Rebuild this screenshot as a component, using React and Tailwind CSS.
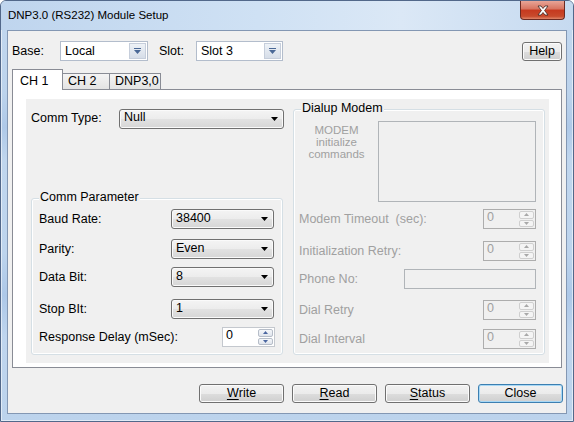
import React from 'react';

const ArrowDown = ({ color = '#000000' }) => (
  <svg width="7" height="4" viewBox="0 0 7 4">
    <path d="M0 0h7L3.5 4z" fill={color} />
  </svg>
);

const SmallTri = ({ up, color }) => (
  <svg width="5" height="3" viewBox="0 0 5 3">
    <path d={up ? 'M0 3h5L2.5 0z' : 'M0 0h5L2.5 3z'} fill={color} />
  </svg>
);

function EditCombo({ value, className }) {
  return (
    <div className={`flex h-[20px] border border-[#b3bdcc] bg-white ${className}`}>
      <div className="flex-1 flex items-center pl-[4px]">{value}</div>
      <div className="w-[17px] my-px mr-px flex items-center justify-center border border-[#c6cedb] bg-gradient-to-b from-[#eef2f7] to-[#d6dde8]">
        <svg width="7" height="6" viewBox="0 0 7 6">
          <rect width="7" height="1" fill="#4a6896" />
          <path d="M0 2h7L3.5 6z" fill="#4a6896" />
        </svg>
      </div>
    </div>
  );
}

function ListCombo({ value, className }) {
  return (
    <div className={`flex h-[20px] rounded-[3px] border border-[#707070] bg-[linear-gradient(#f4f4f4,#ececec_50%,#e2e2e2_50%,#d6d6d6)] shadow-[inset_0_0_0_1px_#fafafa] ${className}`}>
      <div className="flex-1 flex items-center pl-[4px] pb-[2px]">{value}</div>
      <div className="w-[18px] flex items-center justify-center">
        <ArrowDown />
      </div>
    </div>
  );
}

function Spin({ value, disabled }) {
  const arrow = disabled ? '#a8a8a8' : '#4a66a0';
  return (
    <div className={`flex h-[20px] w-[53px] border ${disabled ? 'border-[#adadad] bg-[#f0f0f0] text-[#a0a0a0]' : 'border-[#c4c8ce] bg-white text-black'}`}>
      <div className="flex-1 pl-[3px] leading-[15px]">{value}</div>
      <div className="w-[17px] flex flex-col gap-px p-px">
        <div className={`flex-1 flex items-center justify-center rounded-[2px] border ${disabled ? 'border-[#cfcfcf] bg-[#f4f4f4]' : 'border-[#b6bdc8] bg-gradient-to-b from-[#f5f7fa] to-[#dfe4ec]'}`}>
          <SmallTri up color={arrow} />
        </div>
        <div className={`flex-1 flex items-center justify-center rounded-[2px] border ${disabled ? 'border-[#cfcfcf] bg-[#f4f4f4]' : 'border-[#b6bdc8] bg-gradient-to-b from-[#f5f7fa] to-[#dfe4ec]'}`}>
          <SmallTri color={arrow} />
        </div>
      </div>
    </div>
  );
}

function PushButton({ children, focused, className }) {
  return (
    <div
      className={`flex items-center justify-center h-[19px] rounded-[3px] border bg-[linear-gradient(#f2f2f2,#ebebeb_50%,#dddddd_50%,#cfcfcf)] ${
        focused ? 'border-[#3c7fb1] shadow-[inset_0_0_0_1px_#a8d8f5]' : 'border-[#707070] shadow-[inset_0_0_0_1px_#fbfbfb]'
      } ${className}`}
    >
      {children}
    </div>
  );
}

function GroupBox({ label, className, children }) {
  return (
    <div className={`relative rounded-[3px] border border-[#d5dfe5] shadow-[inset_0_0_0_1px_#ffffff] ${className}`}>
      <span className="absolute left-[7px] top-[-9px] px-[1px] bg-[#f0f0f0] leading-[14px] text-black">
        {label}
      </span>
      {children}
    </div>
  );
}

export default function App() {
  return (
    <div className="w-[574px] h-[422px] bg-white font-['Liberation_Sans',Arial,sans-serif] text-[12.5px] text-black">
      <div className="relative w-[574px] h-[422px] rounded-t-[6px] border border-[#52688a] bg-[linear-gradient(180deg,#c3d8ef_0%,#bcd3ec_22%,#afc9e8_30%,#c0d6ee_38%,#bdd4ed_60%,#adc8e8_70%,#bfd5ee_80%,#bcd3ec_100%)] shadow-[inset_0_0_0_1px_rgba(255,255,255,0.55)]">
        {/* Title bar */}
        <div className="h-[29px] flex items-center pl-[7px] rounded-t-[5px] bg-[linear-gradient(90deg,#bfd5ee,#cfe1f4_45%,#dbe8f6_70%,#c6daf0)]">
          <span className="text-[11.5px] pt-[1px]">DNP3.0 (RS232) Module Setup</span>
        </div>
        <div className="absolute top-0 right-[8px] w-[45px] h-[19px] flex items-center justify-center rounded-b-[4px] border border-t-0 border-[#6b2a22] bg-[linear-gradient(#e8a597,#d7735f_45%,#c6391f_50%,#c84a2c_85%,#e0876a)]">
          <svg width="12" height="11" viewBox="0 0 12 11">
            <path
              d="M1 1h3l2 2.5L8 1h3L7.6 5.5 11 10H8L6 7.5 4 10H1l3.4-4.5z"
              fill="#ffffff"
              stroke="#3a2420"
              strokeWidth="0.8"
            />
          </svg>
        </div>

        {/* Client area */}
        <div className="ml-[6px] w-[560px] h-[384px] border border-[#8397b3] bg-[#f0f0f0] flex flex-col">
          {/* Base / Slot row */}
          <div className="mt-[10px] h-[20px] flex items-center pl-[4px] pr-[4px]">
            <span className="w-[48px]">Base:</span>
            <EditCombo value="Local" className="w-[88px]" />
            <span className="ml-[11px] w-[37px]">Slot:</span>
            <EditCombo value="Slot 3" className="w-[87px]" />
            <PushButton className="ml-auto w-[40px]">Help</PushButton>
          </div>

          {/* Tabs */}
          <div className="mt-[8px] ml-[4px] h-[20px] flex items-end">
            <div className="relative z-10 -mb-px h-[21px] w-[51px] border border-b-0 border-[#898c95] bg-white pl-[7px] pt-[2px]">
              CH 1
            </div>
            <div className="h-[16px] w-[47px] border border-b-0 border-l-0 border-[#898c95] bg-gradient-to-b from-[#f4f4f4] to-[#e3e3e3] pl-[5px] leading-[15px]">
              CH 2
            </div>
            <div className="h-[16px] w-[51px] border border-b-0 border-l-0 border-[#898c95] bg-gradient-to-b from-[#f4f4f4] to-[#e3e3e3] pl-[5px] leading-[15px]">
              DNP3,0
            </div>
          </div>

          {/* Tab page */}
          <div className="ml-[4px] w-[550px] h-[279px] border border-[#898c95] bg-white">
            <div className="ml-[13px] mt-[9px] w-[523px] h-[264px] bg-[#f0f0f0] flex pl-[5px] gap-[9px]">
              {/* Left column */}
              <div className="w-[253px] flex flex-col">
                <div className="mt-[10px] h-[19px] flex items-center">
                  <span className="w-[88px]">Comm Type:</span>
                  <ListCombo value="Null" className="w-[165px] h-[19px]" />
                </div>
                <GroupBox label="Comm Parameter" className="mt-[70px] w-[252px] h-[157px]">
                  <div className="pt-[10px] pl-[7px] flex flex-col">
                    <div className="h-[20px] flex items-center">
                      <span className="w-[132px]">Baud Rate:</span>
                      <ListCombo value="38400" className="w-[103px]" />
                    </div>
                    <div className="mt-[10px] h-[20px] flex items-center">
                      <span className="w-[132px]">Parity:</span>
                      <ListCombo value="Even" className="w-[103px]" />
                    </div>
                    <div className="mt-[8px] h-[20px] flex items-center">
                      <span className="w-[132px]">Data Bit:</span>
                      <ListCombo value="8" className="w-[103px]" />
                    </div>
                    <div className="mt-[12px] h-[20px] flex items-center">
                      <span className="w-[132px]">Stop BIt:</span>
                      <ListCombo value="1" className="w-[103px]" />
                    </div>
                    <div className="mt-[8px] h-[20px] flex items-center">
                      <span className="w-[183px]">Response Delay (mSec):</span>
                      <Spin value="0" />
                    </div>
                  </div>
                </GroupBox>
              </div>

              {/* Right column */}
              <div className="pt-[10px]">
                <GroupBox label="Dialup Modem" className="w-[252px] h-[246px] text-[#a0a0a0]">
                  <div className="flex flex-col pl-[5px] pr-[8px]">
                    <div className="mt-[11px] flex">
                      <div className="w-[75px] pt-[3px] text-center text-[11.5px] leading-[12px]">
                        MODEM
                        <br />
                        initialize
                        <br />
                        commands
                      </div>
                      <div className="ml-[4px] w-[158px] h-[81px] border border-[#b0b4b8] bg-[#f0f0f0]" />
                    </div>
                    <div className="mt-[7px] h-[20px] flex items-center justify-between">
                      <span>Modem Timeout&nbsp; (sec):</span>
                      <Spin value="0" disabled />
                    </div>
                    <div className="mt-[12px] h-[20px] flex items-center justify-between">
                      <span>Initialization Retry:</span>
                      <Spin value="0" disabled />
                    </div>
                    <div className="mt-[8px] h-[20px] flex items-center justify-between">
                      <span>Phone No:</span>
                      <div className="w-[132px] h-[20px] border border-[#b0b4b8] bg-[#f0f0f0]" />
                    </div>
                    <div className="mt-[11px] h-[20px] flex items-center justify-between">
                      <span>Dial Retry</span>
                      <Spin value="0" disabled />
                    </div>
                    <div className="mt-[9px] h-[20px] flex items-center justify-between">
                      <span>Dial Interval</span>
                      <Spin value="0" disabled />
                    </div>
                  </div>
                </GroupBox>
              </div>
            </div>
          </div>

          {/* Bottom buttons */}
          <div className="mt-[16px] flex justify-end gap-[8px] pr-[3px]">
            <PushButton className="w-[85px]">
              <span className="underline underline-offset-2">W</span>rite
            </PushButton>
            <PushButton className="w-[85px]">
              <span className="underline underline-offset-2">R</span>ead
            </PushButton>
            <PushButton className="w-[85px]">
              <span className="underline underline-offset-2">S</span>tatus
            </PushButton>
            <PushButton focused className="w-[85px]">
              Close
            </PushButton>
          </div>
        </div>
      </div>
    </div>
  );
}
